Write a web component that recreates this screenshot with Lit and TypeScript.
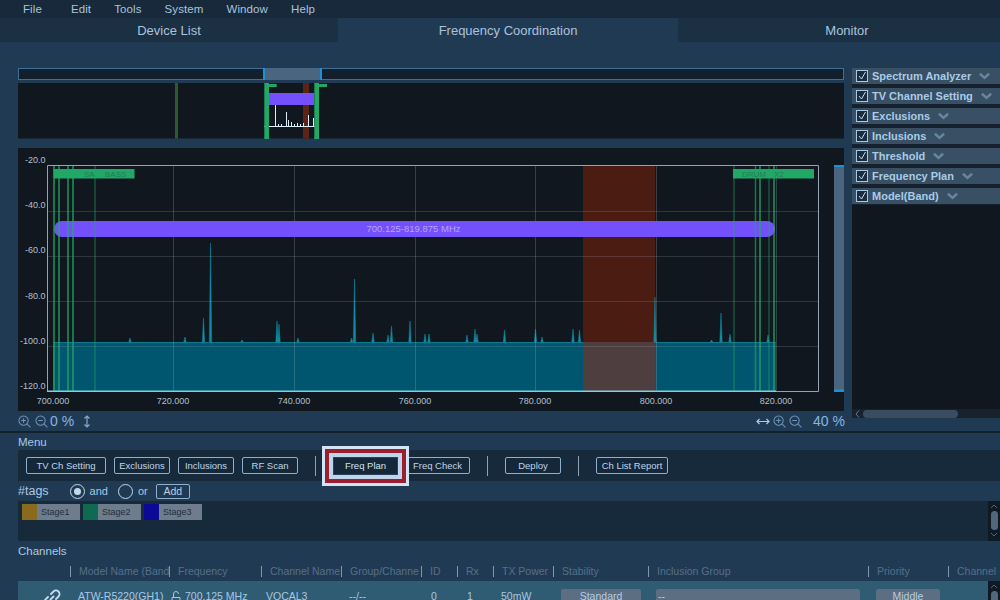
import { LitElement, html, css, svg } from 'lit';
import { customElement } from 'lit/decorators.js';

const gridX = [173, 294, 415, 535, 656, 776];
const gridY = [211, 256, 301, 346];
const xLabels = [[53, '700.000'], [173, '720.000'], [294, '740.000'], [415, '760.000'], [535, '780.000'], [656, '800.000'], [776, '820.000']] as const;
const yLabels = [[163, '-20.0'], [208, '-40.0'], [253, '-60.0'], [299, '-80.0'], [344, '-100.0'], [389, '-120.0']] as const;
// x, top of each spike in the main spectrum
const spikes = [
  [130, 338], [185, 337], [203.5, 318], [210.5, 243], [242, 340], [277, 321], [279, 324], [298, 338],
  [351.5, 338], [354.5, 279], [373, 333], [388, 335], [391.5, 326], [410, 321], [425, 334], [429, 334],
  [467, 335], [475, 329], [477, 334], [504.5, 330], [535.5, 329], [542, 337], [573, 329], [579.5, 330],
  [655, 297], [711.5, 340], [721, 313], [730, 334], [768, 335],
];
const greenLines = [[54, 2], [59, 2], [68, 2], [73, 2], [95, 1], [734, 1], [755.5, 1.5], [760, 2], [769, 1], [774, 2]];
const miniSpikes = [[264, 126], [275, 105], [278, 124], [281, 124], [286, 112], [288, 120], [291, 122], [294, 124], [297, 123], [300, 124], [303, 123], [308, 115], [313, 118]];

const flags = ['Spectrum Analyzer', 'TV Channel Setting', 'Exclusions', 'Inclusions', 'Threshold', 'Frequency Plan', 'Model(Band)'];
const tags = [['Stage1', '#8a6a1c'], ['Stage2', '#0f6a54'], ['Stage3', '#0a0a96']];
const headers = ['Model Name (Band', 'Frequency', 'Channel Name', 'Group/Channe', 'ID', 'Rx', 'TX Power', 'Stability', 'Inclusion Group', 'Priority', 'Channel'];

const zoomIcon = (plus: boolean) => html`<svg class="ico" viewBox="0 0 14 14" fill="none" stroke="#6f93b5" stroke-width="1.1">
  <circle cx="6" cy="6" r="5"></circle><path d="M9.6 9.6 13.4 13.4M3.5 6h5"></path>${plus ? svg`<path d="M6 3.5v5"></path>` : ''}
</svg>`;
const chevron = html`<svg class="chev" viewBox="0 0 12 8" fill="none" stroke="#66869f" stroke-width="2.8"><path d="M1 1.5 6 6l5-4.500"></path></svg>`;

@customElement('app-root')
export class AppRoot extends LitElement {
  static styles = css`
    :host { display: block; width: 1000px; height: 600px; overflow: hidden; background: #213a54; color: #a9c3dc; font-family: "Liberation Sans", Arial, sans-serif; font-size: 11px; }
    .menubar { height: 18px; background: #17293a; display: flex; align-items: center; gap: 23px; padding-left: 23px; font-size: 11.5px; letter-spacing: .1px; }
    .menubar span:first-child { margin-right: 6px; }
    .tabs { height: 24px; display: grid; grid-template-columns: 338px 340px 1fr; background: #1b3043; font-size: 13px; }
    .tabs div { display: flex; align-items: center; justify-content: center; }
    .tabs .on { background: #213a54; }
    .tabs .last { padding-left: 16px; }
    .work { display: grid; grid-template-columns: 826px 148px; gap: 8px; padding: 26px 0 0 18px; height: 389px; box-sizing: border-box; }
    .left { display: flex; flex-direction: column; }
    .chart { display: block; }
    .spectrum { margin-top: 9px; }
    .zoombar { height: 20px; display: flex; justify-content: space-between; align-items: center; color: #86b6e2; font-size: 14px; }
    .zoomside { display: flex; align-items: center; gap: 4px; }
    .zoomside.right { gap: 3px; }
    .ico { width: 13px; height: 13px; }
    .pct { margin-left: -2px; }
    .pct.far { margin-left: 8px; margin-right: -1px; }
    .arrow { width: 14px; height: 13px; }
    .arrow.v { width: 8px; margin-left: 5px; }
    .side { height: 350px; display: flex; flex-direction: column; }
    .flags { background: #15212e; display: flex; flex-direction: column; gap: 4px; padding-bottom: 1px; }
    .flag { height: 16px; background: #394f64; display: flex; align-items: center; padding-left: 4px; gap: 4px; font-weight: bold; color: #a8cbe8; font-size: 11px; }
    .check { width: 10px; height: 10px; border: 1px solid #a8c8e4; background: #1a2c3f; display: block; box-sizing: content-box; }
    .chev { width: 11px; height: 8px; margin-left: 4px; }
    .sidebody { flex: 1; background: #10171e; display: flex; flex-direction: column; justify-content: flex-end; }
    .hscroll { height: 9px; background: #17222e; display: flex; align-items: center; padding-left: 3px; gap: 3px; color: #5f7a94; }
    .hscroll svg { width: 5px; height: 8px; }
    .thumb { width: 95px; height: 8px; border-radius: 4px; background: #394c60; }
    .rule { height: 2px; background: #14202c; }
    .label { height: 17px; padding-left: 18px; display: flex; align-items: center; font-size: 11.5px; color: #a9c8e2; }
    .toolbar { height: 31px; margin-left: 18px; background: #172a3b; display: flex; align-items: center; padding-left: 8px; gap: 8px; }
    .btn { height: 17px; width: 56px; box-sizing: border-box; border: 1.5px solid #8fb0cc; border-radius: 2px; background: #14283a; color: #c0d5e8; font-size: 9.500px; display: flex; align-items: center; justify-content: center; }
    .btn.w80 { width: 80px; }
    .btn.w65 { width: 65px; }
    .btn.w72 { width: 72px; }
    .btn.plan { width: 65px; height: 18px; position: relative; z-index: 1; margin-right: -1px; border-color: #2b4256; border-radius: 0; background: #14283a; color: #d2e2f0; box-shadow: 0 0 0 4px #bcd6ee, 0 0 0 8px #9c1f2d, 0 0 0 11px #d2e4f5; }
    .sep { width: 1px; height: 20px; background: #8aa3ba; margin: 0 9px; }
    .tagsrow { height: 20px; padding-left: 18px; display: flex; align-items: center; font-size: 12.5px; color: #a9c8e2; }
    .radio { width: 15px; height: 15px; box-sizing: border-box; border: 1.5px solid #c2d8ec; border-radius: 50%; margin-left: 10px; display: flex; align-items: center; justify-content: center; }
    .radio.first { margin-left: 21px; }
    .radio i { width: 7px; height: 7px; border-radius: 50%; background: #c2d8ec; }
    .radiotext { margin-left: 5px; font-size: 11px; }
    .add { margin-left: 8px; width: 34px; height: 15px; box-sizing: border-box; border: 1px solid #8fb0cc; border-radius: 2px; display: flex; align-items: center; justify-content: center; font-size: 10.500px; color: #b6cde2; }
    .tagarea { height: 40px; margin-left: 18px; background: #172a3b; display: flex; justify-content: space-between; }
    .taglist { display: flex; gap: 3px; padding: 3px 4px; align-items: flex-start; }
    .tag { width: 58px; height: 16px; background: #6f7c8d; display: flex; align-items: center; color: #222f3b; font-size: 9px; }
    .tag i { width: 15px; height: 16px; margin-right: 4px; }
    .vscroll { width: 12px; height: 100%; background: #101a24; display: flex; flex-direction: column; align-items: center; gap: 2px; padding-top: 3px; box-sizing: border-box; flex: none; }
    .vscroll svg { width: 8px; height: 5px; }
    .vscroll b { width: 7px; height: 19px; border-radius: 4px; background: #51677d; }
    .channels { height: 20px; padding-left: 18px; display: flex; align-items: center; font-size: 11.5px; color: #a9c8e2; }
    .cols { display: grid; grid-template-columns: 52px 99px 92px 80px 80px 36px 36px 60px 95px 220px 80px 52px; width: 982px; }
    .head { height: 20px; margin-left: 18px; align-items: center; color: #566f87; font-size: 10.500px; }
    .head span { border-left: 1px solid #7f96ad; padding-left: 8px; line-height: 11px; white-space: nowrap; }
    .rowwrap { display: flex; margin-left: 18px; height: 40px; }
    .row { background: #2f5b73; width: 970px; grid-template-columns: 52px 99px 92px 80px 80px 36px 36px 60px 95px 220px 80px 40px; height: 40px; align-items: start; color: #a9c8e2; font-size: 10.500px; padding-top: 8px; box-sizing: border-box; }
    .row > * { padding-left: 8px; height: 15px; line-height: 15px; white-space: nowrap; box-sizing: border-box; }
    .row .ch { display: flex; gap: 4px; padding-left: 2px; align-items: center; }
    .row .name { padding-left: 5px; }
    .row .num { padding-left: 10px; }
    .row .pill { background: #5b6e82; border-radius: 2px; text-align: center; color: #b6cde2; height: 16px; margin: 0 7px 0 8px; padding: 0; }
    .row .pill.text { text-align: left; padding-left: 2px; margin-right: 8px; }
    .row .pill.pri { margin-right: 8px; }
    .row .link { padding: 0 0 0 24px; height: 14px; }
    .link svg { width: 20px; height: 20px; margin-top: -1px; display: block; }
    .lock { width: 10px; height: 12px; flex: none; }
  `;

  private renderOverview() {
    return html`<svg class="chart" width="826" height="71" viewBox="18 68 826 71">
      <rect x="18.500" y="68.500" width="825" height="11" fill="#12202e" stroke="#3f6e96"></rect>
      <rect x="263" y="68" width="59" height="12" fill="#4a6580"></rect>
      <rect x="263" y="68" width="2" height="12" fill="#1e90d8"></rect>
      <rect x="320" y="68" width="2" height="12" fill="#1e90d8"></rect>
      <rect x="18" y="83" width="826" height="55.500" fill="#10171e"></rect>
      <rect x="175" y="83" width="3" height="55.500" fill="#2b5a2e"></rect>
      <rect x="303" y="83" width="6" height="55.500" fill="#5c2416"></rect>
      <rect x="269" y="93" width="45" height="12" fill="#7350fb"></rect>
      <path d="M264 126.500H315" stroke="#dfeefa" stroke-width="1"></path>
      ${miniSpikes.map(([x, y]) => svg`<path d="M${x + 0.5} 127V${y}" stroke="#dfeefa" stroke-width="1"></path>`)}
      <path d="M264.300 83H269V139H264.300ZM269 84H276.700V87H269ZM314.300 83H319V139H314.300ZM319 84H327V87H319Z" fill="#22a866"></path>
    </svg>`;
  }

  private renderChart() {
    return html`<svg class="chart spectrum" width="826" height="263" viewBox="18 148 826 263">
      <rect x="18" y="148" width="826" height="263" fill="#10171e"></rect>
      <rect x="583" y="165" width="72" height="177" fill="#4b1c12"></rect>
      <path d="M53 391V342H776V391Z" fill="#01566f"></path>
      <rect x="583" y="342" width="72" height="49" fill="#4f3e40"></rect>
      ${spikes.map(([x, y]) => svg`<path d="M${x - 1.2} 342L${x} ${y}L${x + 1.2} 342Z" fill="#0e8aa3" stroke="#0e8aa3" stroke-width=".5"></path>`)}
      <path d="M53 342.500H583M655 342.500H776" stroke="#0a7a92"></path>
      ${gridX.map((x) => svg`<path d="M${x}.500 165V391" stroke="#a7b4c0" stroke-opacity=".25"></path>`)}
      ${gridY.map((y) => svg`<path d="M47 ${y}.500H818" stroke="#a7b4c0" stroke-opacity=".2"></path>`)}
      <rect x="54" y="221" width="721" height="16" rx="8" fill="#7350fb"></rect>
      ${greenLines.map(([x, w]) => svg`<path d="M${x} 165V391" stroke="#22a866" stroke-opacity=".65" stroke-width="${w}"></path>`)}
      <rect x="53.500" y="169" width="81" height="9.500" fill="#22a866"></rect>
      <rect x="733" y="169" width="81" height="9.500" fill="#22a866"></rect>
      <g font-size="8" fill="#1f7d5c">
        <text x="84" y="177">SA</text><text x="105" y="177">BASS</text>
        <text x="742" y="177">DRUM</text><text x="774" y="177">X2</text>
      </g>
      <text x="413.500" y="232" font-size="9.500" fill="#b7a5ff" text-anchor="middle">700.125-819.875 MHz</text>
      <path d="M47.500 391V165.500H818.500V391.500H776" fill="none" stroke="#93a3b5"></path>
      <path d="M47 391.200H776" stroke="#7fd0e0" stroke-width="1.500"></path>
      <g font-size="9" fill="#b4c0cc">
        ${yLabels.map(([y, t]) => svg`<text x="45.500" y="${y}" text-anchor="end">${t}</text>`)}
        ${xLabels.map(([x, t]) => svg`<text x="${x}" y="404" text-anchor="middle">${t}</text>`)}
      </g>
      <rect x="834" y="165" width="10" height="227" fill="#4a6580"></rect>
      <rect x="834" y="165" width="10" height="2" fill="#1e90d8"></rect>
      <rect x="834" y="389.500" width="10" height="2.500" fill="#1e90d8"></rect>
    </svg>`;
  }

  render() {
    return html`
      <div class="menubar">${['File', 'Edit', 'Tools', 'System', 'Window', 'Help'].map((m) => html`<span>${m}</span>`)}</div>
      <div class="tabs">
        <div>Device List</div>
        <div class="on">Frequency Coordination</div>
        <div class="last">Monitor</div>
      </div>
      <div class="work">
        <div class="left">
          ${this.renderOverview()}
          ${this.renderChart()}
          <div class="zoombar">
            <div class="zoomside">
              ${zoomIcon(true)}${zoomIcon(false)}
              <span class="pct">0 %</span>
              <svg class="arrow v" viewBox="0 0 8 13" fill="none" stroke="#86a8c8" stroke-width="1.200"><path d="M4 1v11M1.500 3.500 4 1l2.500 2.500M1.500 9.500 4 12l2.500-2.500"></path></svg>
            </div>
            <div class="zoomside right">
              <svg class="arrow" viewBox="0 0 14 13" fill="none" stroke="#a9c8e2" stroke-width="1.200"><path d="M1 6.500h12M3.500 4 1 6.500 3.500 9M10.500 4 13 6.500 10.500 9"></path></svg>
              ${zoomIcon(true)}${zoomIcon(false)}
              <span class="pct far">40 %</span>
            </div>
          </div>
        </div>
        <div class="side">
          <div class="flags">
            ${flags.map((f) => html`<div class="flag">
              <svg class="check" viewBox="0 0 10 10" fill="none" stroke="#c4dcf0" stroke-width="1"><path d="M2 5 4.500 8 8.500 1"></path></svg>
              <span>${f}</span>${chevron}
            </div>`)}
          </div>
          <div class="sidebody">
            <div class="hscroll">
              <svg viewBox="0 0 5 8" fill="none" stroke="currentColor"><path d="M4 .5 1 4l3 3.500"></path></svg>
              <div class="thumb"></div>
            </div>
          </div>
        </div>
      </div>
      <div class="rule"></div>
      <div class="label">Menu</div>
      <div class="toolbar">
        <div class="btn w80">TV Ch Setting</div>
        <div class="btn">Exclusions</div>
        <div class="btn">Inclusions</div>
        <div class="btn">RF Scan</div>
        <div class="sep"></div>
        <div class="btn plan">Freq Plan</div>
        <div class="btn w65">Freq Check</div>
        <div class="sep"></div>
        <div class="btn">Deploy</div>
        <div class="sep"></div>
        <div class="btn w72">Ch List Report</div>
      </div>
      <div class="tagsrow">
        <span>#tags</span>
        <span class="radio first"><i></i></span><span class="radiotext">and</span>
        <span class="radio"></span><span class="radiotext">or</span>
        <span class="add">Add</span>
      </div>
      <div class="tagarea">
        <div class="taglist">
          ${tags.map(([name, colour]) => html`<div class="tag"><i style="background:${colour}"></i>${name}</div>`)}
        </div>
        <div class="vscroll">
          <svg viewBox="0 0 8 5" fill="none" stroke="#51677d"><path d="M1 4 4 1l3 3"></path></svg>
          <b></b>
          <svg viewBox="0 0 8 5" fill="none" stroke="#51677d"><path d="M1 1l3 3 3-3"></path></svg>
        </div>
      </div>
      <div class="channels">Channels</div>
      <div class="cols head">
        <div></div>
        ${headers.map((h) => html`<span>${h}</span>`)}
      </div>
      <div class="rowwrap">
        <div class="cols row">
          <div class="link">
            <svg viewBox="0 0 20 20" fill="none" stroke="#c4dcf0" stroke-width="1.800" stroke-linecap="round">
              <path d="M8.500 11.500 11.500 8.500M9 6l2.500-2.500a3.500 3.500 0 0 1 5 5L14 11M11 14l-2.500 2.500a3.500 3.500 0 0 1-5-5L6 9"></path>
            </svg>
          </div>
          <div>ATW-R5220(GH1)</div>
          <div class="ch">
            <svg class="lock" viewBox="0 0 10 12" fill="none" stroke="#a9c8e2"><path d="M1 6.500h8V11.500H1ZM2.500 6.500V3a2.500 2.500 0 0 1 5 0"></path></svg>
            <span>700.125 MHz</span>
          </div>
          <div class="name">VOCAL3</div>
          <div>--/--</div>
          <div class="num">0</div>
          <div class="num">1</div>
          <div>50mW</div>
          <div class="pill">Standard</div>
          <div class="pill text">--</div>
          <div class="pill pri">Middle</div>
          <div></div>
        </div>
        <div class="vscroll">
          <svg viewBox="0 0 8 5" fill="none" stroke="#51677d"><path d="M1 4 4 1l3 3"></path></svg>
          <b></b>
        </div>
      </div>
    `;
  }
}
